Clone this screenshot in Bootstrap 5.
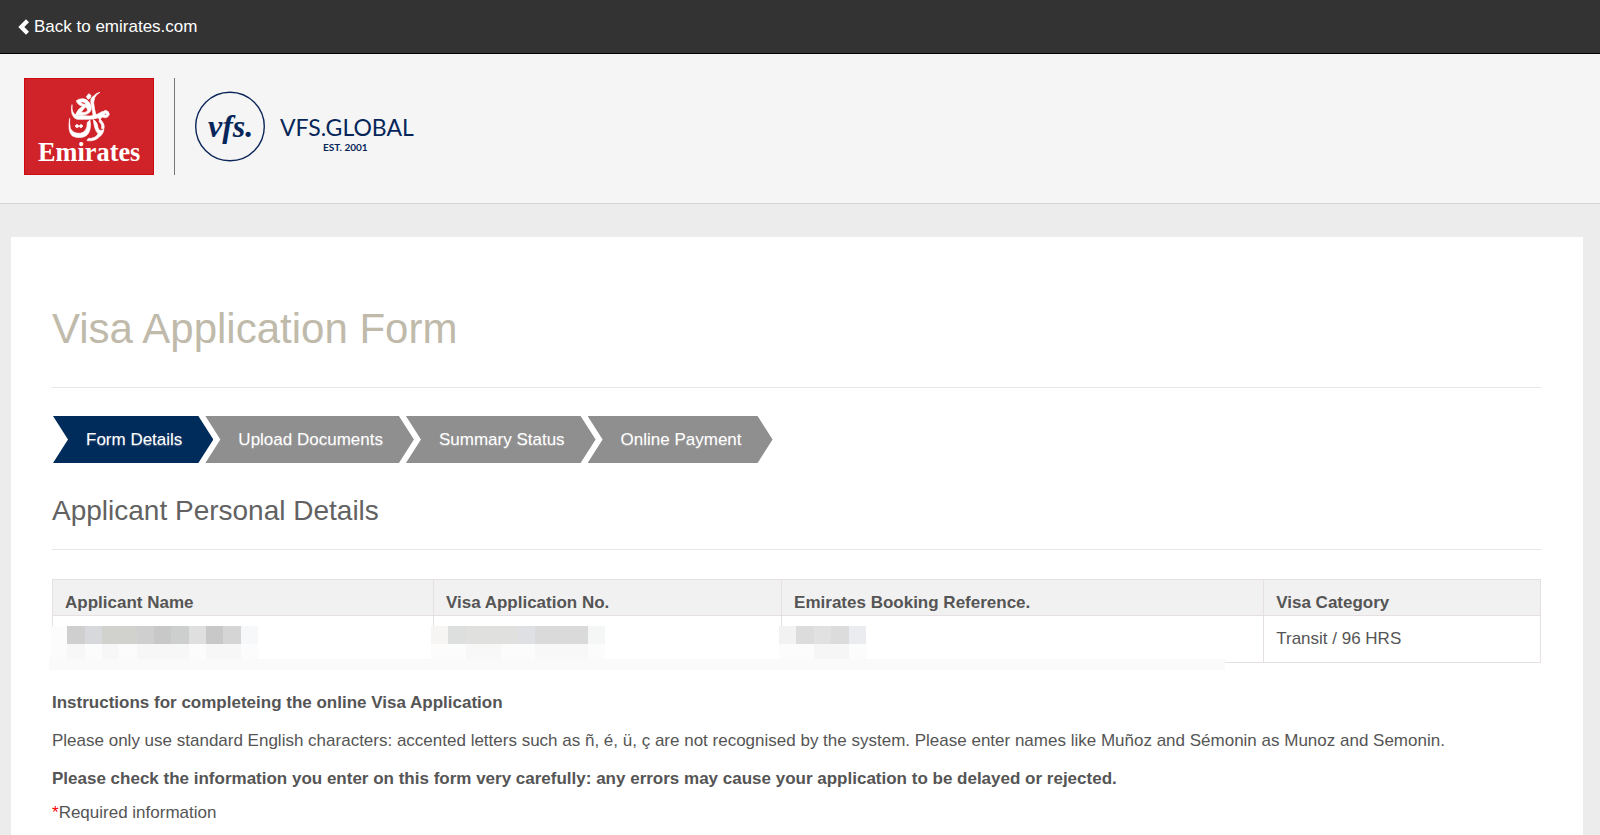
<!DOCTYPE html>
<html lang="en">
<head>
<meta charset="utf-8">
<meta name="viewport" content="width=device-width, initial-scale=1">
<title>Visa Application Form</title>
<link href="https://cdn.jsdelivr.net/npm/bootstrap@5.3.0/dist/css/bootstrap.min.css" rel="stylesheet">
<style>
body{font-family:"Liberation Sans",Arial,sans-serif;font-size:17px;line-height:24px;color:#555;background:#ececec}
.topbar{background:#333;border-bottom:1px solid #000;height:54px;padding:0 18px}
.topbar a{color:#fff}
.brandbar{background:#f5f5f5;border-bottom:1px solid #d6d6d6;padding:24px 24px 28px}
.divider{width:1px;height:97px;background:#777;margin:0 20px}
.panel{background:#fff;margin:33px 17px 0 11px;padding:64px 42px 24px 41px}
h1{font-size:42px;line-height:56px;color:#c0baab;margin:0 0 30px}
h2{font-size:28px;line-height:40px;color:#626262;margin:28px 0 18px}
.rule{border:0;border-top:1px solid #e6e6e6;opacity:1;margin:0}
.steps{margin:28px 0 0 1px}
.step{height:47px;line-height:47px;padding:0 31px 0 33px;margin-right:-8px;background:#8f8f8f;color:#fff;text-decoration:none;text-shadow:0 1px 1px #ddd6;clip-path:polygon(0 0,calc(100% - 15px) 0,100% 50%,calc(100% - 15px) 100%,0 100%,15px 50%)}
.step.current{background:#002c5b}
.details-wrap{margin:29px 0 28px}
.details{margin:0;color:#555;table-layout:fixed;border-color:#e6e0e2}
.details th,.details td{padding:11px 12px 0;color:#555}
.details th{background:#f1f1f1;height:36px}
.details td{height:47px}
.pixels{position:absolute;left:-3px;top:10px}
.strip{position:absolute;left:-3px;bottom:-7px;width:79%;height:11px;background:#fafafa}
.notes p{margin-bottom:14px}
.notes .warning{margin-bottom:10px}
.required{color:#f00}
</style>
</head>
<body>
<nav class="topbar d-flex align-items-center" aria-label="Site">
  <a href="#" class="d-flex align-items-center text-decoration-none"><svg width="12" height="16" viewBox="0 0 12 16" class="me-1" aria-hidden="true"><path d="M8 .3 11 3.200 6.300 8l4.700 4.800-3 2.900L.300 8z" fill="#fff"/></svg>Back to emirates.com</a>
</nav>
<header class="brandbar d-flex align-items-center">
  <svg width="130" height="97" viewBox="30 24 390 291" role="img" aria-label="Emirates">
    <rect x="30" y="24" width="390" height="291" fill="#d10a11"/><rect x="33" y="27" width="384" height="285" fill="#cf2229"/>
    <g transform="translate(147 54)" fill="#fff" stroke="#fff" stroke-width="2" stroke-linejoin="round">
      <path d="M111 13Q101 17 95 29L92 44Q94 65 99 80L91 90Q89 65 84 47 80 31 92 24 99 15 111 13z"/>
      <path d="M77 17l7 5-2 8-7 4-5-8z"/>
      <path fill-rule="evenodd" d="M38 80Q44 62 59 55 43 50 40 38 56 27 72 36 88 51 84 67 77 85 38 80zM54 73Q67 76 74 68 74 60 67 57zM52 42Q58 49 67 50 68 40 52 42z"/>
      <path d="M27 50Q25 78 42 82L80 84Q99 84 119 70L123 78Q103 95 80 94L42 94Q20 86 27 50z"/>
      <path fill-rule="evenodd" d="M127 67Q139 69 139 80 132 94 119 87L109 95 106 89 118 78Q119 69 127 67zM128 74l-4 6 6 2z"/>
      <path d="M20 91Q19 107 22 121 29 137 52 136 73 132 73 103L81 96Q87 129 70 143 50 154 28 144 13 131 20 91z"/>
      <path d="M91 94Q103 101 105 118 108 133 123 124 121 139 108 148 94 161 72 158L75 152Q99 151 105 137 94 127 91 94zM111 93Q127 109 123 122L116 122Q119 110 108 100z"/>
      <path d="M36 114l6-5 6 5 6-5 6 5-6 6-6-5-6 5z"/>
    </g>
    <text x="72" y="273" font-family="Liberation Serif,serif" font-weight="700" font-size="79" fill="#fff">Emirates</text>
  </svg>
  <div class="divider"></div>
  <svg width="222" height="97" viewBox="195 78 222 97" role="img" aria-label="VFS.Global">
    <circle cx="230" cy="126.500" r="34.300" fill="none" stroke="#0b2558" stroke-width="1.400"/>
    <g fill="#06265a">
      <text x="208" y="137" font-family="Liberation Serif,serif" font-style="italic" font-weight="700" font-size="32">vfs.</text>
      <text x="280" y="136" font-family="Lato,sans-serif" font-size="23">VFS.GLOBAL</text>
      <text x="323" y="151" font-family="Lato,sans-serif" font-weight="700" font-size="10">EST. 2001</text>
    </g>
  </svg>
</header>
<main class="panel">
  <h1 class="fw-normal">Visa Application Form</h1>
  <hr class="rule">
  <nav class="steps d-flex flex-wrap" aria-label="Progress">
    <a href="#" class="step current" aria-current="step">Form Details</a>
    <a href="#" class="step">Upload Documents</a>
    <a href="#" class="step">Summary Status</a>
    <a href="#" class="step">Online Payment</a>
  </nav>
  <h2 class="fw-normal">Applicant Personal Details</h2>
  <hr class="rule">
  <div class="details-wrap position-relative">
    <table class="table table-bordered details">
      <colgroup><col style="width:25.600%"><col style="width:23.400%"><col style="width:32.400%"><col style="width:18.600%"></colgroup>
      <thead><tr><th scope="col">Applicant Name</th><th scope="col">Visa Application No.</th><th scope="col">Emirates Booking Reference.</th><th scope="col">Visa Category</th></tr></thead>
      <tbody><tr>
        <td class="position-relative"><svg class="pixels" width="208" height="35" viewBox="0 0 12 2" preserveAspectRatio="none" shape-rendering="crispEdges" role="img" aria-label="Hidden name"><path fill="#fcfcfc" d="M0 0h12v2H0z"/><path fill="#cfcfcf" d="M1 0h10v1H1z"/><path fill="#d7d8dc" d="M2 0h1v1H2z"/><path fill="#d1d1cd" d="M3 0h2v1H3z"/><path fill="#c8c8c8" d="M6 0h1v1H6zM9 0h1v1H9z"/><path fill="#cccfcd" d="M7 0h1v1H7z"/><path fill="#dfdfdf" d="M8 0h1v1H8z"/><path fill="#d5d5d5" d="M10 0h1v1h-1z"/><path fill="#f6f8fa" d="M11 0h1v1h-1z"/><path fill="#f7f7f7" d="M1 1h1v1H1zM3 1h1v1H3zM5 1h3v1H5zM9 1h2v1H9z"/></svg></td>
        <td class="position-relative"><svg class="pixels" width="174" height="35" viewBox="0 0 10 2" preserveAspectRatio="none" shape-rendering="crispEdges" role="img" aria-label="Hidden number"><path fill="#fcfcfc" d="M0 0h10v2H0z"/><path fill="#f6f5f3" d="M0 0h1v1H0z"/><path fill="#dcdfdd" d="M1 0h1v1H1z"/><path fill="#e0e0de" d="M2 0h3v1H2z"/><path fill="#dfe0e4" d="M5 0h1v1H5z"/><path fill="#dadada" d="M6 0h3v1H6z"/><path fill="#f5f7f7" d="M9 0h1v1H9z"/><path fill="#f8f8f8" d="M2 1h2v1H2zM6 1h3v1H6z"/></svg></td>
        <td class="position-relative"><svg class="pixels" width="87" height="35" viewBox="0 0 5 2" preserveAspectRatio="none" shape-rendering="crispEdges" role="img" aria-label="Hidden reference"><path fill="#fcfcfc" d="M0 0h5v2H0z"/><path fill="#f2f2f2" d="M0 0h1v1H0z"/><path fill="#dcdcdc" d="M1 0h1v1H1zM3 0h1v1H3z"/><path fill="#e1e1e1" d="M2 0h1v1H2z"/><path fill="#ebecef" d="M4 0h1v1H4z"/><path fill="#f6f6f6" d="M2 1h2v1H2z"/></svg></td>
        <td>Transit / 96 HRS</td>
      </tr></tbody>
    </table>
    <div class="strip"></div>
  </div>
  <div class="notes">
    <p class="fw-bold">Instructions for completeing the online Visa Application</p>
    <p>Please only use standard English characters: accented letters such as ñ, é, ü, ç are not recognised by the system. Please enter names like Muñoz and Sémonin as Munoz and Semonin.</p>
    <p class="fw-bold warning">Please check the information you enter on this form very carefully: any errors may cause your application to be delayed or rejected.</p>
    <p><span class="required">*</span>Required information</p>
  </div>
</main>
<script src="https://cdn.jsdelivr.net/npm/bootstrap@5.3.0/dist/js/bootstrap.bundle.min.js"></script>
</body>
</html>
